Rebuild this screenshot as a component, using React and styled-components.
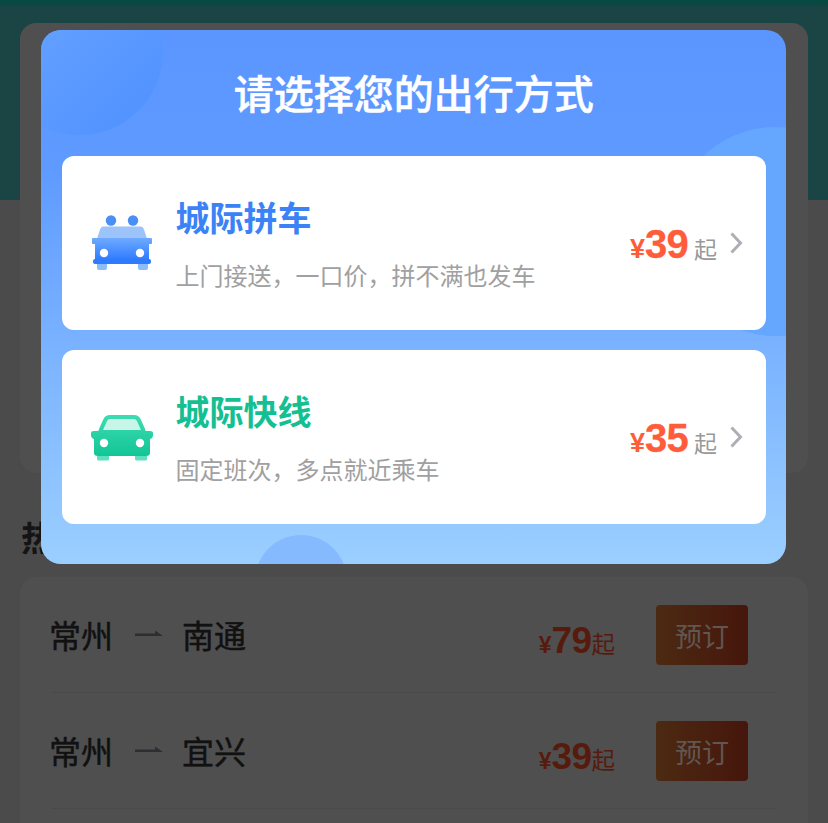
import React from "react";
import styled, { createGlobalStyle } from "styled-components";

const Global = createGlobalStyle`
  html, body { margin: 0; padding: 0; height: 823px; overflow: hidden; background: #4b4b4b; }
  * { box-sizing: border-box; }
  body { font-family: "Noto Sans CJK SC", "Liberation Sans", sans-serif; }
`;

const Page = styled.div`
  position: relative;
  height: 823px;
  overflow: hidden;
  padding: 23px 20px 0 20px;
  background:
    linear-gradient(#064a42 0, #0a4842 5px, #1b4444 6px, #1b4444 200px, #4b4b4b 200px);
`;

const SearchCard = styled.div`
  height: 450px;
  border-radius: 16px;
  background: #4f4f4f;
`;

const Heading = styled.h2`
  margin: 42px 0 0 1px;
  height: 44px;
  font-size: 34px;
  line-height: 44px;
  font-weight: 700;
  color: #141414;
`;

const RouteCard = styled.div`
  margin-top: 18px;
  padding: 0 31px;
  min-height: 260px;
  border-radius: 16px 16px 0 0;
  background: #4f4f4f;
`;

const RouteRow = styled.div`
  display: flex;
  align-items: center;
  height: 116px;
  border-bottom: 1px solid #4a4a4a;
`;

const City = styled.span`
  font-size: 32px;
  line-height: 40px;
  width: 64px;
  margin: 0 0 2px -2px;
  color: #111;
  white-space: nowrap;
  -webkit-text-stroke: 0.5px #111;
`;

const ArrowIcon = styled.svg`
  width: 30px;
  height: 10px;
  margin: 0 20px 2px 21px;
  flex: none;
`;

const RoutePrice = styled.div`
  margin-left: auto;
  display: flex;
  align-items: baseline;
  color: #561b0d;
  padding-top: 13px;
`;

const SmallYen = styled.span`
  font-family: "Liberation Sans", sans-serif;
  font-size: 23px;
  font-weight: 700;
`;

const RouteAmount = styled.span`
  font-family: "Liberation Sans", sans-serif;
  font-size: 37px;
  font-weight: 700;
  letter-spacing: -0.6px;
`;

const RouteUnit = styled.span`
  font-size: 23.5px;
`;

const BookButton = styled.button`
  width: 92px;
  height: 60px;
  margin: 1px 29px 0 41px;
  border: 0;
  padding: 0;
  border-radius: 4px;
  background: linear-gradient(90deg, #4c2a12, #46160c);
  color: #615650;
  font-family: inherit;
  font-size: 27px;
`;

const Modal = styled.div`
  position: absolute;
  left: 41px;
  top: 30px;
  width: 745px;
  height: 534px;
  padding: 0 20px 0 20.5px;
  border-radius: 20px;
  overflow: hidden;
  background: linear-gradient(180deg, #5b96ff 0%, #5e9aff 25%, #9bcfff 100%);
`;

const Bubble = styled.div`
  position: absolute;
  left: ${(p) => p.$x}px;
  top: ${(p) => p.$y}px;
  width: ${(p) => p.$d}px;
  height: ${(p) => p.$d}px;
  border-radius: 50%;
  background: ${(p) => p.$bg};
`;

const ModalTitle = styled.h1`
  position: relative;
  margin: 0;
  height: 126px;
  padding-top: 34px;
  text-align: center;
  font-size: 40px;
  line-height: 56px;
  font-weight: 500;
  color: #fff;
  -webkit-text-stroke: 0.5px #fff;
`;

const Options = styled.div`
  position: relative;
  display: flex;
  flex-direction: column;
  gap: 20px;
`;

const OptionCard = styled.div`
  display: flex;
  align-items: center;
  height: 174px;
  padding: 0 23px 0 29px;
  border-radius: 12px;
  background: #fff;
`;

const OptionIcon = styled.svg`
  width: 62px;
  height: 60px;
  flex: none;
  margin-right: 23px;
`;

const OptionText = styled.div`
  display: flex;
  flex-direction: column;
  gap: 20px;
`;

const OptionName = styled.div`
  font-size: 34px;
  line-height: 44px;
  font-weight: 700;
  color: ${(p) => p.$color};
`;

const OptionNote = styled.div`
  font-size: 24px;
  line-height: 32px;
  color: #a0a0a0;
`;

const OptionPrice = styled.div`
  margin-left: auto;
  padding-top: 2px;
  display: flex;
  align-items: baseline;
  color: #ff5c3a;
`;

const Yen = styled.span`
  font-family: "Liberation Sans", sans-serif;
  font-size: 27px;
  font-weight: 700;
`;

const Amount = styled.span`
  font-family: "Liberation Sans", sans-serif;
  font-size: 40px;
  font-weight: 700;
  letter-spacing: -0.8px;
  -webkit-text-stroke: 0.3px #ff5c3a;
`;

const Unit = styled.span`
  margin-left: 6px;
  font-size: 23px;
  color: #999;
`;

const Chevron = styled.svg`
  width: 14px;
  height: 22px;
  margin-left: 12px;
  flex: none;
`;

const PoolIcon = () => (
  <OptionIcon viewBox="0 0 62 60">
    <defs>
      <linearGradient id="poolBody" x1="0" y1="0" x2="0" y2="1">
        <stop offset="0" stopColor="#6eaaff" />
        <stop offset="1" stopColor="#2f7bff" />
      </linearGradient>
    </defs>
    <circle cx="20" cy="7.5" r="5.2" fill="#4a8ff5" />
    <circle cx="42" cy="7.5" r="5.2" fill="#4a8ff5" />
    <path d="M12 13.500h38q2 0 3 3l3 9H6l3-9q1-3 3-3z" fill="#9cc4fb" />
    <path d="M2 25h58q1 0 1 1v4q0 1-1 1h-2v16H4V31H2q-1 0-1-1v-4q0-1 1-1z" fill="url(#poolBody)" />
    <rect x="2" y="46" width="58" height="5" rx="2" fill="#2f7bff" />
    <path d="M6 51h10v4q0 2-2 2H8q-2 0-2-2zM47 51h10v4q0 2-2 2h-6q-2 0-2-2z" fill="#8dbcfb" />
    <circle cx="13" cy="40" r="4.200" fill="#fff" />
    <circle cx="49" cy="40" r="4.200" fill="#fff" />
  </OptionIcon>
);

const CarIcon = () => (
  <OptionIcon viewBox="0 0 62 60">
    <defs>
      <linearGradient id="carBody" x1="0" y1="0" x2="0" y2="1">
        <stop offset="0" stopColor="#3ddcb0" />
        <stop offset="1" stopColor="#12c596" />
      </linearGradient>
    </defs>
    <path d="M19 8h24q5 0 7 5l4 9q0 2 1 2h4q3 0 3 2v2q0 3-3 4v14q0 3-4 3H7q-4 0-4-3V32q-3-1-3-4v-2q0-2 3-2h4q1 0 1-2l4-9q2-5 7-5z" fill="url(#carBody)" />
    <path d="M19 12h24q2 0 3 2l4 9H12l4-9q1-2 3-2z" fill="#c8f5e8" />
    <path d="M6 49h12v3q0 1.500-1.500 1.500h-9Q6 53.500 6 52zM44 49h12v3q0 1.500-1.500 1.500h-9Q44 53.500 44 52z" fill="#5fe0bf" />
    <circle cx="13" cy="36" r="4.200" fill="#fff" />
    <circle cx="49" cy="36" r="4.200" fill="#fff" />
  </OptionIcon>
);

const Arrow = () => (
  <ArrowIcon viewBox="0 0 30 10">
    <path d="M1 7H29L21 1.500V4.500H1z" fill="#2e2e32" />
  </ArrowIcon>
);

const Next = () => (
  <Chevron viewBox="0 0 14 22">
    <path d="M2.500 1.500L11.500 11L2.500 20.500" fill="none" stroke="#aeaeb6" strokeWidth="3" />
  </Chevron>
);

const routes = [
  { to: "南通", price: "79" },
  { to: "宜兴", price: "39" },
];

export default function App() {
  return (
    <Page>
      <Global />
      <SearchCard />
      <Heading>热门路线</Heading>
      <RouteCard>
        {routes.map((r) => (
          <RouteRow key={r.to}>
            <City>常州</City>
            <Arrow />
            <City>{r.to}</City>
            <RoutePrice>
              <SmallYen>¥</SmallYen>
              <RouteAmount>{r.price}</RouteAmount>
              <RouteUnit>起</RouteUnit>
            </RoutePrice>
            <BookButton>预订</BookButton>
          </RouteRow>
        ))}
      </RouteCard>
      <Modal>
        <Bubble $x={-45} $y={-62} $d={167} $bg="linear-gradient(135deg, #6aa6ff, #4f90ff)" />
        <Bubble $x={630} $y={97} $d={209} $bg="#65a7ff" />
        <Bubble $x={214} $y={505} $d={92} $bg="#85baff" />
        <ModalTitle>请选择您的出行方式</ModalTitle>
        <Options>
          <OptionCard>
            <PoolIcon />
            <OptionText>
              <OptionName $color="#3a82f6">城际拼车</OptionName>
              <OptionNote>上门接送，一口价，拼不满也发车</OptionNote>
            </OptionText>
            <OptionPrice>
              <Yen>¥</Yen>
              <Amount>39</Amount>
              <Unit>起</Unit>
            </OptionPrice>
            <Next />
          </OptionCard>
          <OptionCard>
            <CarIcon />
            <OptionText>
              <OptionName $color="#14bf92">城际快线</OptionName>
              <OptionNote>固定班次，多点就近乘车</OptionNote>
            </OptionText>
            <OptionPrice>
              <Yen>¥</Yen>
              <Amount>35</Amount>
              <Unit>起</Unit>
            </OptionPrice>
            <Next />
          </OptionCard>
        </Options>
      </Modal>
    </Page>
  );
}
